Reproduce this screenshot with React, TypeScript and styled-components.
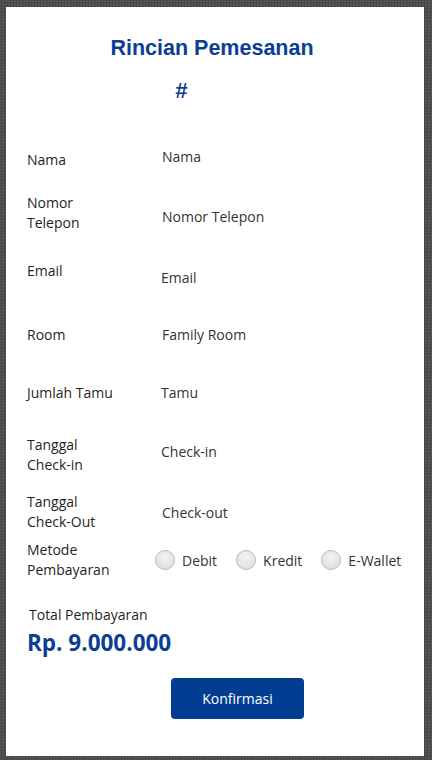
import styled, { createGlobalStyle } from 'styled-components'

type Field = {
  label: string
  value: string
  height: number
  labelDy?: number
  valueDy?: number
  valueDx?: number
}

const fields: Field[] = [
  { label: 'Nama', value: 'Nama', height: 53, labelDy: 1, valueDy: -2 },
  { label: 'Nomor\nTelepon', value: 'Nomor Telepon', height: 57, labelDy: -1, valueDy: 3 },
  { label: 'Email', value: 'Email', height: 61, labelDy: -2, valueDy: 5, valueDx: -1 },
  { label: 'Room', value: 'Family Room', height: 60, labelDy: 2, valueDy: 2 },
  { label: 'Jumlah Tamu', value: 'Tamu', height: 60, valueDx: -1 },
  { label: 'Tanggal\nCheck-in', value: 'Check-in', height: 59, labelDy: 2, valueDy: -1, valueDx: -1 },
  { label: 'Tanggal\nCheck-Out', value: 'Check-out', height: 53, labelDy: 3, valueDy: 4 },
]

const payments = ['Debit', 'Kredit', 'E-Wallet']

export default function App() {
  return (
    <>
      <GlobalStyle />
      <Panel>
        <Title>Rincian Pemesanan</Title>
        <OrderId>#</OrderId>
        <Form>
          {fields.map((f) => (
            <Row key={f.label} $height={f.height}>
              <Label $dy={f.labelDy ?? 0}>{f.label}</Label>
              <Value $dy={f.valueDy ?? 0} $dx={f.valueDx ?? 0}>{f.value}</Value>
            </Row>
          ))}
          <Row $height={50}>
            <Label $dy={0}>{'Metode\nPembayaran'}</Label>
            <RadioGroup>
              {payments.map((p) => (
                <RadioOption key={p}>
                  <Radio type='radio' name='metode' />
                  {p}
                </RadioOption>
              ))}
            </RadioGroup>
          </Row>
        </Form>
        <TotalLabel>Total Pembayaran</TotalLabel>
        <TotalAmount>Rp. 9.000.000</TotalAmount>
        <ButtonRow>
          <ConfirmButton>Konfirmasi</ConfirmButton>
        </ButtonRow>
      </Panel>
    </>
  )
}

const GlobalStyle = createGlobalStyle`
  html, body {
    margin: 0;
    height: 100%;
  }
  body {
    background-color: #4d4d4d;
    background-image: repeating-conic-gradient(#444 0% 25%, #5a5a5a 0% 50%);
    background-size: 3px 3px;
    font-family: 'Open Sans', 'Noto Sans', sans-serif;
  }
  #root {
    padding: 7px 8px 4px 6px;
  }
`

const Panel = styled.div`
  background: #fff;
  width: 418px;
  height: 749px;
  box-sizing: border-box;
  padding: 28px 0 0 21px;
`

const Title = styled.h1`
  margin: 0;
  padding-right: 27px;
  text-align: center;
  font-family: 'Liberation Sans', Arial, sans-serif;
  font-weight: bold;
  font-size: 21.5px;
  line-height: 26px;
  color: #0b3e94;
`

const OrderId = styled.div`
  margin: 17px 0 0 148px;
  font-family: 'Liberation Sans', Arial, sans-serif;
  font-weight: bold;
  font-style: italic;
  font-size: 22px;
  line-height: 26px;
  color: #0b3e94;
`

const Form = styled.div`
  margin-top: 28px;
  display: flex;
  flex-direction: column;
`

const Row = styled.div<{ $height: number }>`
  height: ${(p) => p.$height}px;
  display: grid;
  grid-template-columns: 135px 1fr;
  align-items: center;
`

const Label = styled.div<{ $dy: number }>`
  font-size: 14px;
  line-height: 20px;
  color: #1f1f1f;
  white-space: pre-line;
  position: relative;
  top: ${(p) => p.$dy}px;
`

const Value = styled.div<{ $dy: number; $dx: number }>`
  font-size: 14px;
  line-height: 20px;
  color: #333;
  position: relative;
  top: ${(p) => p.$dy}px;
  left: ${(p) => p.$dx}px;
`

const RadioGroup = styled.div`
  display: flex;
  align-items: center;
  gap: 19px;
  margin-left: -7px;
`

const RadioOption = styled.label`
  display: flex;
  align-items: center;
  gap: 7px;
  font-size: 14px;
  color: #333;
`

const Radio = styled.input`
  appearance: none;
  margin: 0;
  width: 20px;
  height: 20px;
  border-radius: 50%;
  border: 1px solid #b9b9b9;
  background: radial-gradient(circle at 50% 35%, #f3f3f3 0%, #e2e2e2 70%, #d8d8d8 100%);
  box-sizing: border-box;
`

const TotalLabel = styled.div`
  margin: 20px 0 0 2px;
  font-size: 14px;
  line-height: 20px;
  color: #1f1f1f;
`

const TotalAmount = styled.div`
  margin-top: 4px;
  font-weight: bold;
  font-size: 22.5px;
  line-height: 28px;
  color: #0b3e94;
`

const ButtonRow = styled.div`
  display: flex;
  padding-left: 144px;
  margin-top: 21px;
`

const ConfirmButton = styled.button`
  width: 133px;
  height: 41px;
  border: none;
  border-radius: 4px;
  background: #023d92;
  color: #fff;
  font-family: 'Open Sans', 'Noto Sans', sans-serif;
  font-size: 14px;
`
